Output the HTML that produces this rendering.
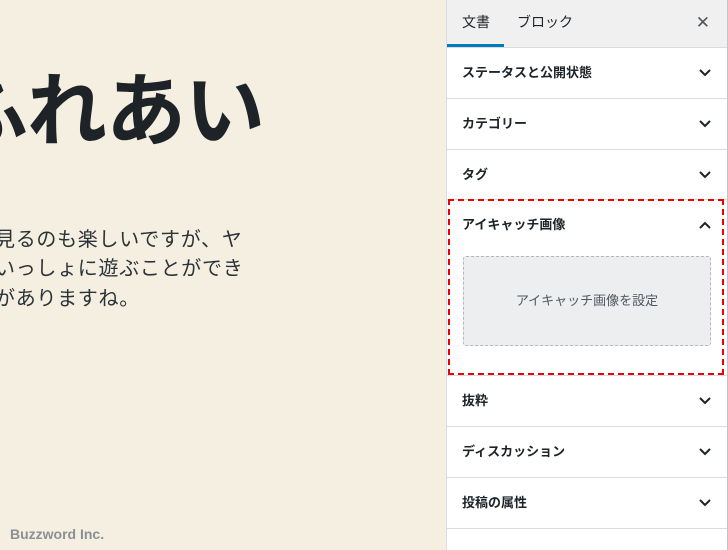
<!DOCTYPE html>
<html><head><meta charset="utf-8"><style>
*{margin:0;padding:0;box-sizing:border-box}
body{width:728px;height:550px;overflow:hidden;position:relative;background:#f4efe1;font-family:"Liberation Sans","Noto Sans CJK JP",sans-serif}
.ed{position:absolute;left:0;top:0;width:446px;height:550px;overflow:hidden;background:#f4efe1}
.title{position:absolute;left:-52px;top:62px;font-size:80px;font-weight:bold;color:#1d2327;white-space:nowrap;line-height:100px;letter-spacing:-1px}
.p{position:absolute;left:-5px;font-size:20px;color:#2c3338;white-space:nowrap;line-height:29px;letter-spacing:0.7px}
.foot{position:absolute;left:10px;top:526px;font-size:14px;font-weight:bold;color:#8c8f94}
.sb{position:absolute;left:446px;top:0;width:282px;height:550px;background:#fff;border-left:1px solid #dcdcde;border-right:1px solid #c3c4c7}
.hd{height:48px;background:#f0f0f1;border-bottom:1px solid #dcdcde;position:relative}
.tab{position:absolute;top:12px;font-size:14px;color:#1d2327}
.ul{position:absolute;left:0;top:44px;width:57px;height:3px;background:#007cba}
.x{position:absolute;right:17px;top:13px;font-size:17px;color:#50575e}
.row{height:51px;border-bottom:1px solid #dcdcde;position:relative;font-size:13px;font-weight:bold;color:#1d2327;padding:14px 0 0 15px}
.chev{position:absolute;right:16px;top:21px;width:12px;height:8px}
.fi{position:absolute;left:1px;top:199px;width:276px;height:176px;border:2px dashed #e00}
.btn{position:absolute;left:16px;top:256px;width:248px;height:90px;background:#eceef0;border:1px dashed #b4b6b9;border-radius:3px;font-size:13px;color:#50575e;text-align:center;line-height:88px}
</style></head><body>
<div class="ed">
<div class="title">ふれあい</div>
<div class="p" style="top:226px">見るのも楽しいですが、ヤ</div>
<div class="p" style="top:255px">いっしょに遊ぶことができ</div>
<div class="p" style="top:285px">があります<span>ね。</span></div>
<div class="foot">Buzzword Inc.</div>
</div>
<div class="sb">
<div class="hd"><span class="tab" style="left:15px">文書</span><span class="tab" style="left:70px">ブロック</span><div class="ul"></div><span class="x">✕</span></div>
<div class="row">ステータスと公開状態<svg class="chev" viewBox="0 0 12 8"><path d="M1 1l5 5 5-5" stroke="#1d2327" stroke-width="2" fill="none"/></svg></div>
<div class="row">カテゴリー<svg class="chev" viewBox="0 0 12 8"><path d="M1 1l5 5 5-5" stroke="#1d2327" stroke-width="2" fill="none"/></svg></div>
<div class="row" style="height:50px">タグ<svg class="chev" viewBox="0 0 12 8"><path d="M1 1l5 5 5-5" stroke="#1d2327" stroke-width="2" fill="none"/></svg></div>
<div class="row" style="height:176px">アイキャッチ画像<svg class="chev" viewBox="0 0 12 8"><path d="M1 7l5-5 5 5" stroke="#1d2327" stroke-width="2" fill="none"/></svg></div>
<div class="row">抜粋<svg class="chev" viewBox="0 0 12 8"><path d="M1 1l5 5 5-5" stroke="#1d2327" stroke-width="2" fill="none"/></svg></div>
<div class="row">ディスカッション<svg class="chev" viewBox="0 0 12 8"><path d="M1 1l5 5 5-5" stroke="#1d2327" stroke-width="2" fill="none"/></svg></div>
<div class="row">投稿の属性<svg class="chev" viewBox="0 0 12 8"><path d="M1 1l5 5 5-5" stroke="#1d2327" stroke-width="2" fill="none"/></svg></div>
<div class="btn">アイキャッチ画像を設定</div>
<div class="fi"></div>
</div>
</body></html>
